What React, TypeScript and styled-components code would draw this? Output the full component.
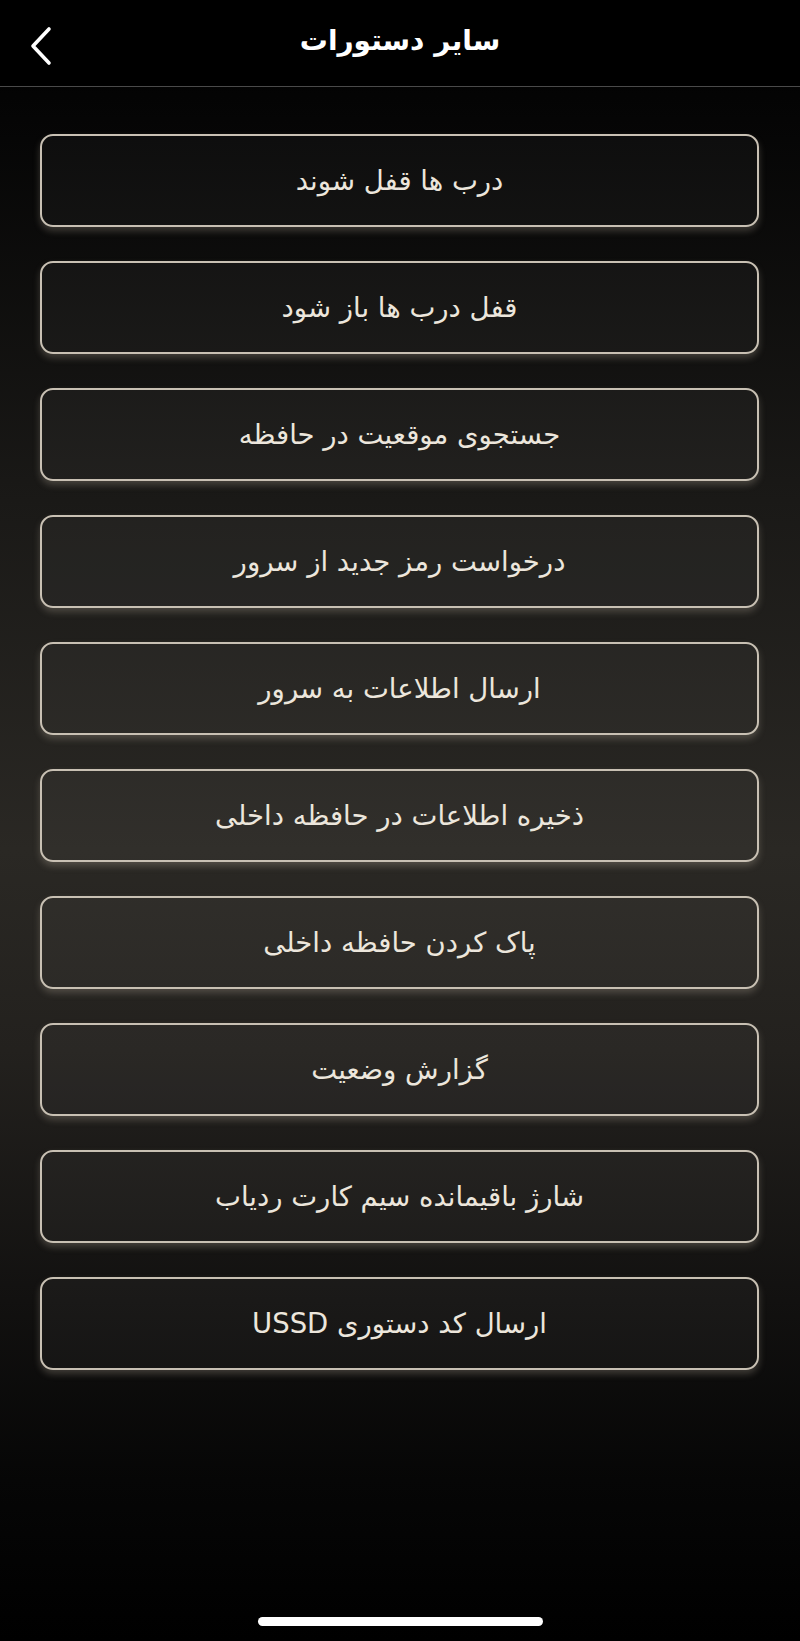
import styled, { createGlobalStyle } from 'styled-components'

const GlobalStyle = createGlobalStyle`
  html, body {
    margin: 0;
    padding: 0;
    background: #000;
  }
  * {
    box-sizing: border-box;
  }
`

const Screen = styled.div`
  width: 800px;
  min-height: 1641px;
  display: flex;
  flex-direction: column;
  font-family: 'DejaVu Sans', 'Noto Sans', sans-serif;
  background: linear-gradient(
    180deg,
    #000 0px,
    #050505 120px,
    #1a1917 500px,
    #2a2824 850px,
    #23211e 1050px,
    #121110 1300px,
    #060606 1480px,
    #000 1641px
  );
`

const Header = styled.header`
  height: 87px;
  display: flex;
  align-items: center;
  justify-content: center;
  position: relative;
  background: #000;
  border-bottom: 1px solid #4a4a4a;
`

const BackButton = styled.button`
  position: absolute;
  left: 26px;
  top: 24px;
  width: 30px;
  height: 44px;
  padding: 0;
  border: none;
  background: transparent;
  display: flex;
  align-items: center;
  justify-content: center;
  cursor: pointer;
`

const Title = styled.h1`
  margin: 0;
  margin-top: -6px;
  color: #fff;
  font-size: 28px;
  font-weight: 700;
  direction: rtl;
`

const List = styled.div`
  display: flex;
  flex-direction: column;
  gap: 34px;
  padding: 47px 41px 0 40px;
`

const CommandButton = styled.button`
  height: 93px;
  width: 100%;
  border: 2px solid #c8c0b3;
  border-radius: 13px;
  background: rgba(255, 255, 255, 0.035);
  box-shadow: 0 4px 7px rgba(190, 180, 160, 0.28);
  color: #ece6dc;
  font-family: inherit;
  font-size: 27.5px;
  direction: rtl;
  display: flex;
  align-items: center;
  justify-content: center;
  padding: 0 0 2px;
  cursor: pointer;
`

const Spacer = styled.div`
  flex: 1;
`

const HomeIndicator = styled.div`
  width: 285px;
  height: 9px;
  border-radius: 5px;
  background: #fff;
  margin: 0 auto 15px;
`

const commands = [
  'درب ها قفل شوند',
  'قفل درب ها باز شود',
  'جستجوی موقعیت در حافظه',
  'درخواست رمز جدید از سرور',
  'ارسال اطلاعات به سرور',
  'ذخیره اطلاعات در حافظه داخلی',
  'پاک کردن حافظه داخلی',
  'گزارش وضعیت',
  'شارژ باقیمانده سیم کارت ردیاب',
  'ارسال کد دستوری USSD',
]

export default function App() {
  return (
    <>
      <GlobalStyle />
      <Screen>
        <Header>
          <BackButton aria-label='back'>
            <svg width='24' height='40' viewBox='0 0 24 40' fill='none'>
              <path
                d='M20 3 L4 20 L20 37'
                stroke='#fff'
                strokeWidth='3.6'
                strokeLinecap='round'
                strokeLinejoin='round'
              />
            </svg>
          </BackButton>
          <Title>سایر دستورات</Title>
        </Header>
        <List>
          {commands.map((c, idx) => (
            <CommandButton key={idx}>{c}</CommandButton>
          ))}
        </List>
        <Spacer />
        <HomeIndicator />
      </Screen>
    </>
  )
}
